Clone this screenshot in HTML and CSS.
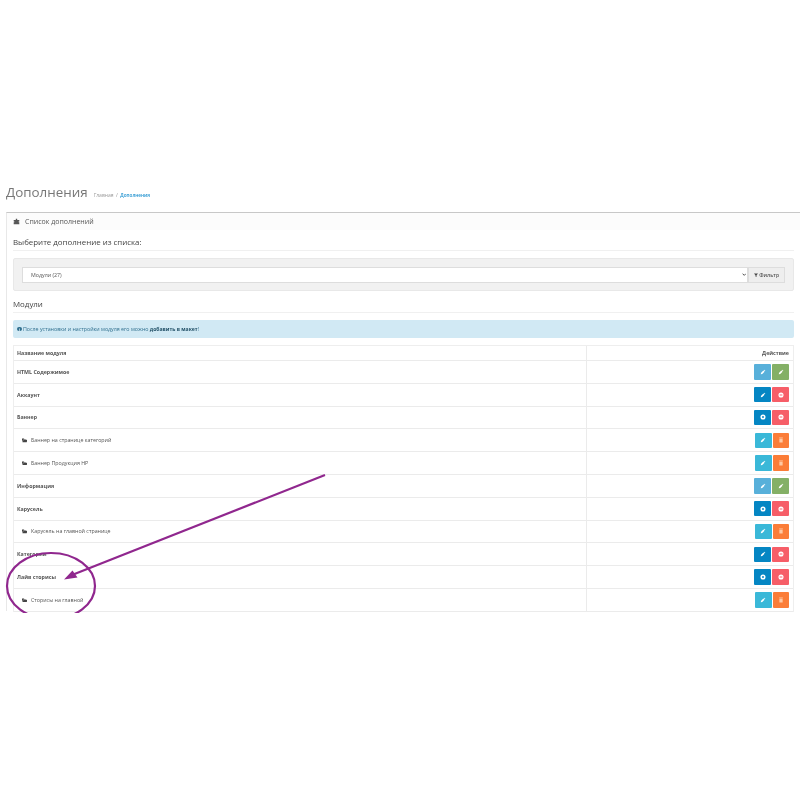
FILE: index.html
```html
<!DOCTYPE html>
<html lang="ru">
<head>
<meta charset="utf-8">
<title>Дополнения</title>
<link rel="stylesheet" href="styles.css">
</head>
<body>
<div class="page">
  <div class="heading"><h1>Дополнения</h1><span class="crumb">Главная</span><span class="sep">/</span><a class="crumb link">Дополнения</a></div>
  <section class="panel">
    <div class="panel-head">
      <svg class="i-puzzle" viewBox="0 0 10 10"><path d="M4 1h2v2h3v2H8v1h1v3H1V6h1V5H1V3h3z" fill="#555"/></svg>
      <span>Список дополнений</span>
    </div>
    <div class="panel-body">
      <h2 class="sect">Выберите дополнение из списка:</h2>
      <div class="well">
        <div class="select"><span>Модули (27)</span><svg class="chev" viewBox="0 0 8 5"><path d="M1 1l3 3 3-3" fill="none" stroke="#333" stroke-width="1.500"/></svg></div>
        <div class="filter"><svg viewBox="0 0 8 8"><path d="M0 1h8L5 4.500V8L3 7V4.500z" fill="#444"/></svg>Фильтр</div>
      </div>
      <h2 class="sect second">Модули</h2>
      <div class="alert"><span class="dot">i</span><span>После установки и настройки модуля его можно <b>добавить в макет</b>!</span></div>
      <div class="table">
        <div class="row head"><div class="name">Название модуля</div><div class="act">Действие</div></div>
        <div class="row"><div class="name b">HTML Содержимое</div><div class="act"><span class="btn blue"><svg viewBox="0 0 8 8"><use href="#pen"/></svg></span><span class="btn green"><svg viewBox="0 0 8 8"><use href="#pen"/></svg></span></div></div>
        <div class="row"><div class="name b">Аккаунт</div><div class="act"><span class="btn navy"><svg viewBox="0 0 8 8"><use href="#pen"/></svg></span><span class="btn red"><svg viewBox="0 0 8 8"><use href="#minus"/></svg></span></div></div>
        <div class="row"><div class="name b">Баннер</div><div class="act"><span class="btn navy"><svg viewBox="0 0 8 8"><use href="#gear"/></svg></span><span class="btn red"><svg viewBox="0 0 8 8"><use href="#minus"/></svg></span></div></div>
        <div class="row"><div class="name sub"><svg class="folder" viewBox="0 0 10 8"><use href="#folder"/></svg>Баннер на странице категорий</div><div class="act"><span class="btn cyan"><svg viewBox="0 0 8 8"><use href="#pen"/></svg></span><span class="btn orange"><svg viewBox="0 0 8 8"><use href="#trash"/></svg></span></div></div>
        <div class="row"><div class="name sub"><svg class="folder" viewBox="0 0 10 8"><use href="#folder"/></svg>Баннер Продукция HP</div><div class="act"><span class="btn cyan"><svg viewBox="0 0 8 8"><use href="#pen"/></svg></span><span class="btn orange"><svg viewBox="0 0 8 8"><use href="#trash"/></svg></span></div></div>
        <div class="row"><div class="name b">Информация</div><div class="act"><span class="btn blue"><svg viewBox="0 0 8 8"><use href="#pen"/></svg></span><span class="btn green"><svg viewBox="0 0 8 8"><use href="#pen"/></svg></span></div></div>
        <div class="row"><div class="name b">Карусель</div><div class="act"><span class="btn navy"><svg viewBox="0 0 8 8"><use href="#gear"/></svg></span><span class="btn red"><svg viewBox="0 0 8 8"><use href="#minus"/></svg></span></div></div>
        <div class="row"><div class="name sub"><svg class="folder" viewBox="0 0 10 8"><use href="#folder"/></svg>Карусель на главной странице</div><div class="act"><span class="btn cyan"><svg viewBox="0 0 8 8"><use href="#pen"/></svg></span><span class="btn orange"><svg viewBox="0 0 8 8"><use href="#trash"/></svg></span></div></div>
        <div class="row"><div class="name b">Категории</div><div class="act"><span class="btn navy"><svg viewBox="0 0 8 8"><use href="#pen"/></svg></span><span class="btn red"><svg viewBox="0 0 8 8"><use href="#minus"/></svg></span></div></div>
        <div class="row"><div class="name b">Лайв сторисы</div><div class="act"><span class="btn navy"><svg viewBox="0 0 8 8"><use href="#gear"/></svg></span><span class="btn red"><svg viewBox="0 0 8 8"><use href="#minus"/></svg></span></div></div>
        <div class="row"><div class="name sub"><svg class="folder" viewBox="0 0 10 8"><use href="#folder"/></svg>Сторисы на главной</div><div class="act"><span class="btn cyan"><svg viewBox="0 0 8 8"><use href="#pen"/></svg></span><span class="btn orange"><svg viewBox="0 0 8 8"><use href="#trash"/></svg></span></div></div>
      </div>
    </div>
  </section>
</div>
<svg class="overlay" viewBox="0 0 800 613" aria-hidden="true">
  <ellipse cx="51" cy="586" rx="44" ry="33" fill="none" stroke="#90278e" stroke-width="2.200"/>
  <path d="M325 475L72 575" stroke="#90278e" stroke-width="2.200" fill="none"/>
  <path d="M64 579.500L72.500 570.500L77.500 577.500z" fill="#90278e"/>
</svg>
<svg class="defs" aria-hidden="true">
  <defs>
    <path id="pen" d="M1 7l.5-2 3-3 1.500 1.500-3 3zM5 1.500l.7-.6 1.400 1.400-.6.700z" fill="#fff"/>
    <path id="minus" d="M4 .6a3.400 3.400 0 1 1 0 6.800a3.400 3.400 0 1 1 0-6.800zM2.200 3.200v1.600h3.600V3.200z" fill="#fff" fill-rule="evenodd"/>
    <path id="gear" d="M4 .6a3.400 3.400 0 1 1 0 6.800a3.400 3.400 0 1 1 0-6.800zM4 2.700a1.300 1.300 0 1 0 0 2.600a1.300 1.300 0 1 0 0-2.600z" fill="#fff" fill-rule="evenodd"/>
    <path id="trash" d="M1.500 .8h5v1h-5zM1.800 2.300h4.400v5H1.800z" fill="#ffc9a3"/>
    <path id="folder" d="M0 1h3.500l1 1H8v1H2L0 7zM2.500 3.700H10L8.500 7.500H.8z" fill="#444"/>
  </defs>
</svg>
</body>
</html>
```

FILE: styles.css
```css
* { box-sizing: border-box; }
html, body { margin: 0; background: #fff; }
body { width: 800px; height: 800px; overflow: hidden; position: relative; font-family: "Open Sans", sans-serif; color: #555; }
.page { padding: 184px 0 0 6px; filter: blur(.35px); }
.heading { display: flex; align-items: baseline; height: 28px; }
h1 { margin: 0 6px 0 0; font-size: 13.400px; font-weight: 400; line-height: 16px; color: #777; }
.crumb { font-size: 5px; color: #999; }
.sep { font-size: 5px; color: #999; margin: 0 2.500px; }
.link { font-size: 4.700px; color: #1e91cf; font-weight: 600; }
.panel { border-left: 1px solid #e8e8e8; border-top: 1px solid #c8c8c8; height: 399px; }
.panel-head { display: flex; align-items: center; gap: 5px; height: 17px; padding-left: 6px; background: #fcfcfc; font-size: 7px; color: #555; }
.i-puzzle { width: 7px; height: 7px; }
.panel-body { padding: 0 6px 0 6px; }
.sect { margin: 0; height: 14px; padding-top: 6px; font-size: 7.900px; line-height: 12px; font-weight: 400; color: #444; border-bottom: 1px solid #f0f0f0; box-sizing: content-box; }
.second { margin-top: 7px; height: 14px; padding-top: 0; }
.well { display: flex; align-items: center; margin-top: 7px; height: 33px; padding: 0 8px; background: #f1f1f1; border: 1px solid #e8e8e8; border-radius: 2px; }
.select { flex: 1; display: flex; align-items: center; justify-content: space-between; height: 16px; padding: 0 1px 0 8px; background: #fff; border: 1px solid #ddd; font-size: 5.300px; color: #555; }
.chev { width: 4.500px; height: 3px; }
.filter { display: flex; align-items: center; justify-content: center; gap: 1.500px; width: 37px; height: 16px; background: #eee; border: 1px solid #ddd; font-size: 5.200px; font-weight: 600; color: #555; }
.filter svg { width: 4px; height: 4px; }
.alert { display: flex; align-items: center; margin-top: 7px; height: 18px; padding-left: 4px; background: #d1e9f4; border-radius: 2px; font-size: 5.300px; color: #31708f; }
.alert b { font-size: 5.100px; color: #245269; }
.dot { display: inline-flex; align-items: center; justify-content: center; width: 4.500px; height: 4.500px; margin-right: 1.500px; background: #31708f; border-radius: 50%; color: #fff; font-size: 3.500px; font-weight: 700; }
.table { margin-top: 7px; border: 1px solid #eee; border-bottom: 0; }
.row { display: grid; grid-template-columns: 572px 1fr; height: 22.800px; border-bottom: 1px solid #ebebeb; }
.head { height: 15px; border-bottom-width: 1.500px; }
.name { display: flex; align-items: center; padding-left: 3px; font-size: 5.300px; color: #555; }
.head .name { font-weight: 700; color: #555; }
.head .act { font-weight: 700; font-size: 5.300px; align-items: center; }
.name.b { font-weight: 700; }
.sub { padding-left: 7.500px; }
.folder { width: 5.500px; height: 4.500px; margin-right: 4px; }
.act { display: flex; justify-content: flex-end; align-items: center; gap: 1px; padding-right: 4px; border-left: 1px solid #ebebeb; color: #555; }
.btn { display: flex; align-items: center; justify-content: center; width: 17px; height: 15.500px; border-radius: 1px; }
.btn svg { width: 6px; height: 6px; }
.blue { background: #58b0da; }
.green { background: #84b066; }
.navy { background: #0586c3; }
.red { background: #f65e68; }
.cyan { background: #3ab8d8; width: 16.500px; }
.orange { background: #fb7d38; width: 16.500px; }
.overlay { position: absolute; left: 0; top: 0; width: 800px; height: 613px; }
.defs { position: absolute; width: 0; height: 0; }
```
